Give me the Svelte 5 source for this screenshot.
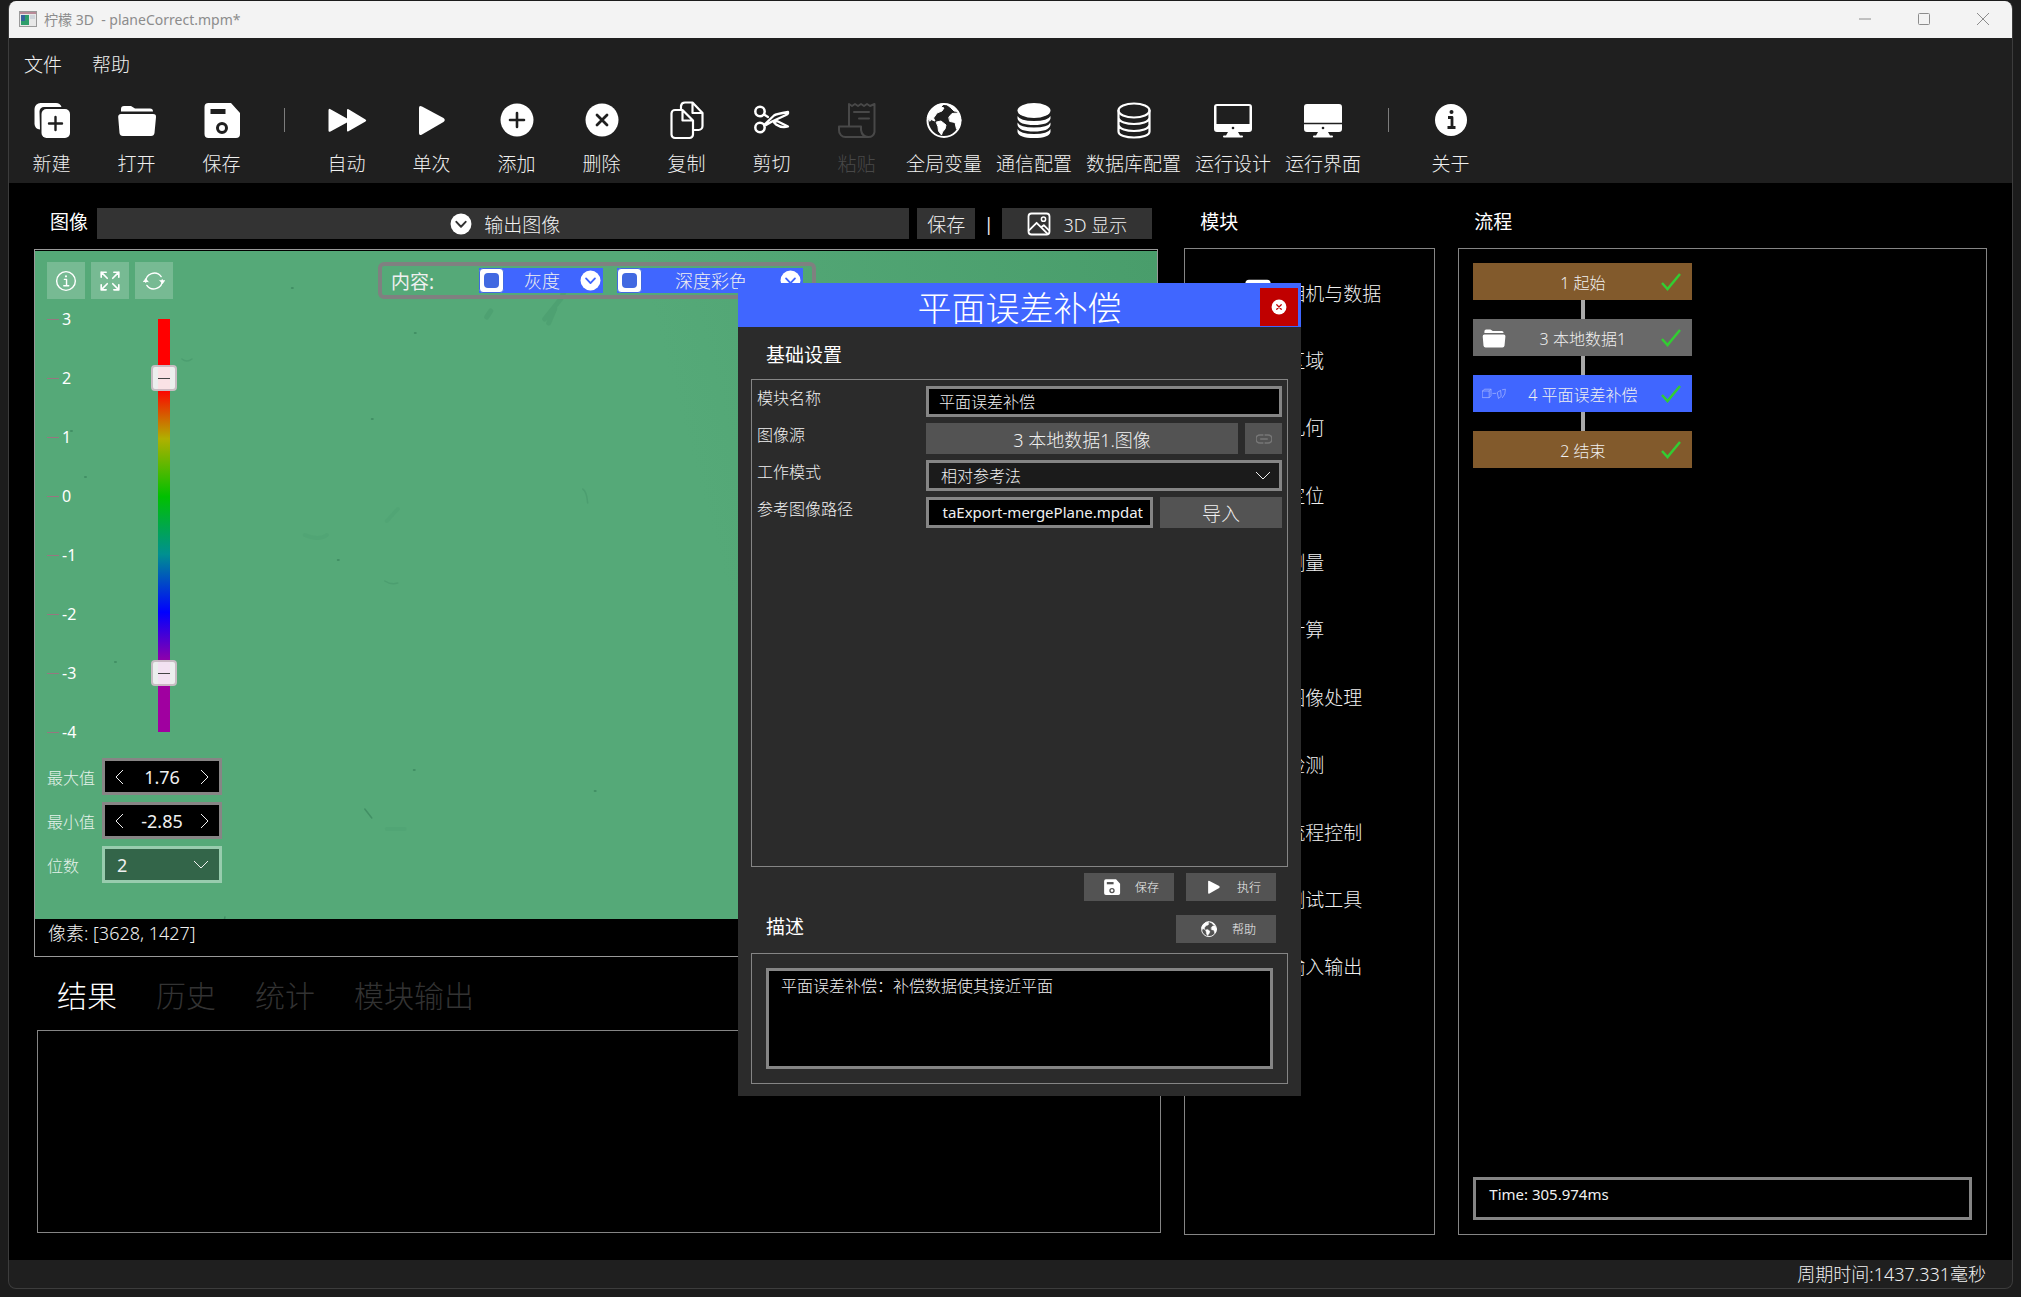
<script lang="ts">
  interface Tool {
    icon: string;
    label: string;
    disabled?: boolean;
  }

  const toolGroups: Tool[][] = [
    [
      { icon: "new", label: "新建" },
      { icon: "folder", label: "打开" },
      { icon: "save", label: "保存" },
    ],
    [
      { icon: "auto", label: "自动" },
      { icon: "play", label: "单次" },
      { icon: "add", label: "添加" },
      { icon: "remove", label: "删除" },
      { icon: "copy", label: "复制" },
      { icon: "cut", label: "剪切" },
      { icon: "paste", label: "粘贴", disabled: true },
      { icon: "globe", label: "全局变量" },
      { icon: "dbFilled", label: "通信配置" },
      { icon: "db", label: "数据库配置" },
      { icon: "screen", label: "运行设计" },
      { icon: "screenFilled", label: "运行界面" },
    ],
    [{ icon: "info", label: "关于" }],
  ];

  const modules = ["相机与数据", "区域", "几何", "定位", "测量", "计算", "图像处理", "检测", "流程控制", "测试工具", "输入输出"];

  const flow = [
    { label: "1 起始", kind: "terminal", icon: "" },
    { label: "3 本地数据1", kind: "data", icon: "folder" },
    { label: "4 平面误差补偿", kind: "active", icon: "plane" },
    { label: "2 结束", kind: "terminal", icon: "" },
  ];

  const ticks = [3, 2, 1, 0, -1, -2, -3, -4];
  const tabs = ["结果", "历史", "统计", "模块输出"];

  let activeTab = $state("结果");
  let upper = $state(2);
  let lower = $state(-3);
  let maxValue = $state("1.76");
  let minValue = $state("-2.85");
  let moduleName = $state("平面误差补偿");
  let description = $state("平面误差补偿：补偿数据使其接近平面");
  let dialogOpen = $state(true);

  function step(value: string, delta: number) {
    return (parseFloat(value) + delta).toFixed(2);
  }
</script>

{#snippet icon(name: string)}
  <svg class="icon" viewBox="0 0 40 40" fill="none" stroke-linecap="round" stroke-linejoin="round" aria-hidden="true">
    {#if name === "new"}
      <path d="M8 29.5 A6 6 0 0 1 2.5 24 V9 A6 6 0 0 1 8.5 3 H24 A6 6 0 0 1 29.5 7 H12 A4.500 4.500 0 0 0 7.500 11.500 Z" fill="currentColor" />
      <rect x="9.500" y="9" width="28.500" height="29" rx="5" fill="currentColor" />
      <path d="M23.500 17 V30 M17 23.500 H30" stroke="var(--cut)" stroke-width="2.400" />
    {:else if name === "folder"}
      <path d="M4 11.500 V9 A3 3 0 0 1 7 6 H14 L18 8.500 H33 A3 3 0 0 1 36 11.500 Z" fill="currentColor" />
      <path d="M4 14 H36 A3 3 0 0 1 39 17.300 L37.500 33 A3.500 3.500 0 0 1 34 36 H6 A3.500 3.500 0 0 1 2.500 33 L1.200 17.300 A3 3 0 0 1 4 14 Z" fill="currentColor" />
    {:else if name === "save"}
      <path d="M6.500 3 H29 L38 13 V34 A4 4 0 0 1 34 38 H6.500 A4 4 0 0 1 2.500 34 V7 A4 4 0 0 1 6.500 3 Z" fill="currentColor" />
      <path d="M8.500 9 H23.500 V14 H8.500 Z" fill="var(--cut)" />
      <circle cx="20" cy="28" r="4.500" stroke="var(--cut)" stroke-width="3" />
    {:else if name === "auto"}
      <path d="M1.500 10.500 Q1.500 8 3.500 9.200 L20 18.500 V10.500 Q20 8.500 21.500 9.200 L38.500 19.500 Q40 20.500 38.500 21.500 L21.500 31.200 Q20 32 20 30.500 V22.500 L3.500 31.500 Q1.500 32.500 1.500 30.500 Z" fill="currentColor" />
    {:else if name === "play"}
      <path d="M7 8 Q7 5 10 6.500 L31.500 18 Q34 20 31.500 22 L10 34.500 Q7 36 7 33 Z" fill="currentColor" />
    {:else if name === "add"}
      <circle cx="20" cy="20" r="16.500" fill="currentColor" />
      <path d="M20 13 V27 M13 20 H27" stroke="var(--cut)" stroke-width="2.600" />
    {:else if name === "remove"}
      <circle cx="20" cy="20" r="16.500" fill="currentColor" />
      <path d="M15 15 L25 25 M25 15 L15 25" stroke="var(--cut)" stroke-width="2.800" />
    {:else if name === "copy"}
      <g stroke="currentColor" stroke-width="2.200">
        <path d="M14 9 V6 A4 4 0 0 1 18 2.500 H25.500 L35.500 13 V26 A4 4 0 0 1 31.500 30 H27 M25.500 2.500 V13 H35.500" />
        <path d="M8 10 H15.500 L26 20.500 V34.500 A3.500 3.500 0 0 1 22.500 38 H8 A3.500 3.500 0 0 1 4.500 34.500 V13.500 A3.500 3.500 0 0 1 8 10 Z M15.500 10 V20.500 H26" />
      </g>
    {:else if name === "cut"}
      <g stroke="currentColor">
        <circle cx="8" cy="11.500" r="4.700" stroke-width="2.500" />
        <circle cx="8" cy="27.500" r="4.700" stroke-width="2.500" />
        <path d="M12 14.500 L16 17 M12.500 24.500 L22 15.500 Q24 14 36 12 Q36.500 14 34 15 L20 21.500 L14 25 M22 22.500 L25 21 L36 26.500 Q30 28.500 24 24.500 Z" stroke-width="2.300" />
      </g>
    {:else if name === "paste"}
      <path d="M12 26 V4 L15 6 L18 4 L21 6 L24 4 L27 6 L30 4 L33 6 L37.500 4 V32 A6 6 0 0 1 31.500 37 H9 A6.500 6.500 0 0 1 2 30 V26.500 H24 V30 Q25 37 31.500 37 M17 12 H32 M22 18.500 H32" stroke="currentColor" stroke-width="2" />
    {:else if name === "globe"}
      <circle cx="20" cy="20.500" r="16.500" stroke="currentColor" stroke-width="2" />
      <path d="M3.500 17 Q6 8 14 5 L20 3.500 L17 7 L20 8 L18 11 L13 13 L11 16 L9.500 18 L11 21 L7 19.500 L6 21 Z M23 4.500 L30 6.500 L34 11.500 L30 11 L27 8 Z M12.500 22 L17 21 L22 25 L21 29 L18.500 32 L17.500 35 L14.500 31 L14 27 Z M25 17 L28 13.500 L34 13 L37 20 L35 28 L32.500 29 L31 22.500 L26 21.500 Z" fill="currentColor" stroke="currentColor" />
    {:else if name === "dbFilled"}
      <ellipse cx="20" cy="10.500" rx="16.500" ry="7.500" fill="currentColor" />
      <g fill="currentColor">
        <path d="M3.500 16 Q6 21 20 21 Q34 21 36.500 16 V18.500 Q35 25 20 25 Q5 25 3.500 18.500 Z" />
        <path d="M3.500 22.500 Q6 27.500 20 27.500 Q34 27.500 36.500 22.500 V25 Q35 31.500 20 31.500 Q5 31.500 3.500 25 Z" />
        <path d="M3.500 29 Q6 34 20 34 Q34 34 36.500 29 V32 Q35 38 20 38 Q5 38 3.500 32 Z" />
      </g>
    {:else if name === "db"}
      <g stroke="currentColor" stroke-width="2.200">
        <ellipse cx="20" cy="10.500" rx="15.500" ry="7" />
        <path d="M4.500 10.500 V31.500 C4.500 39.500 35.500 39.500 35.500 31.500 V10.500 M4.500 18 C6 26 34 26 35.500 18 M4.500 25 C6 33 34 33 35.500 25" />
      </g>
    {:else if name === "screen"}
      <path d="M4 4 H36 A3 3 0 0 1 39 7 V29 A3 3 0 0 1 36 32 H25 L27 35.500 H29 A1 1 0 0 1 29 37.500 H11 A1 1 0 0 1 11 35.500 H13 L15 32 H4 A3 3 0 0 1 1 29 V7 A3 3 0 0 1 4 4 Z" fill="currentColor" />
      <path d="M3.500 6 H36.500 V24 H3.500 Z" fill="var(--cut)" />
      <circle cx="20" cy="28" r="1.300" fill="var(--cut)" />
    {:else if name === "screenFilled"}
      <path d="M4 4 H36 A3 3 0 0 1 39 7 V29 A3 3 0 0 1 36 32 H25 L27 35.500 H29 A1 1 0 0 1 29 37.500 H11 A1 1 0 0 1 11 35.500 H13 L15 32 H4 A3 3 0 0 1 1 29 V7 A3 3 0 0 1 4 4 Z" fill="currentColor" />
      <path d="M1 23.500 H39" stroke="var(--cut)" stroke-width="1.300" />
      <circle cx="20" cy="28" r="1.300" fill="var(--cut)" />
    {:else if name === "info"}
      <circle cx="20" cy="20" r="16" fill="currentColor" />
      <path d="M17 17.500 H21 V27 M16.500 27.500 H24.500" stroke="var(--cut)" stroke-width="2.800" stroke-linecap="butt" />
      <circle cx="20.500" cy="12" r="2" fill="var(--cut)" />
    {:else if name === "infoLine"}
      <circle cx="20" cy="20" r="17" stroke="currentColor" stroke-width="2.600" />
      <path d="M17 17 H21 V28 M16 28.500 H25" stroke="currentColor" stroke-width="2.600" />
      <circle cx="20" cy="11.500" r="2" fill="currentColor" />
    {:else if name === "expand"}
      <path d="M4 13 V4 H13 M4 4 L15 15 M27 4 H36 V13 M36 4 L25 15 M4 27 V36 H13 M4 36 L15 25 M27 36 H36 V27 M36 36 L25 25" stroke="currentColor" stroke-width="3" />
    {:else if name === "refresh"}
      <path d="M5 22 A15.500 15.500 0 0 1 33 12 M35 18 A15.500 15.500 0 0 1 7 28" stroke="currentColor" stroke-width="2.600" />
      <path d="M0 22 L5 15.500 L10 22 M30 18.500 L35.500 25 L40 18.500" fill="currentColor" stroke="currentColor" />
    {:else if name === "drop"}
      <circle cx="20" cy="20" r="19" fill="currentColor" />
      <path d="M11.500 16 L20 25 L28.500 16" stroke="var(--cut)" stroke-width="3.500" />
    {:else if name === "picture"}
      <rect x="2.500" y="2.500" width="35" height="35" rx="5" stroke="currentColor" stroke-width="3" />
      <path d="M3 31 L16 18 L34 36 M24 25 L28 22 L37 31" stroke="currentColor" stroke-width="3" />
      <circle cx="27.500" cy="12" r="3.500" stroke="currentColor" stroke-width="2.500" />
    {:else if name === "link"}
      <path d="M17 10 H10 A10 10 0 0 0 10 30 H17 M23 10 H30 A10 10 0 0 1 30 30 H23 M12 20 H28" stroke="currentColor" stroke-width="4" />
    {:else if name === "plane"}
      <path d="M1 15 H12 V26 H1 Z M1 15 L4 12 H15 V23 L12 26 M12 15 L15 12 M18 19 H23 M26 17 L31 14 L32 24 L28 27 Z M34 13 L39 12 L38 20 L34 26" stroke="currentColor" stroke-width="1.200" />
    {:else if name === "camera"}
      <path d="M2 6 A5 5 0 0 1 7 1 H33 A5 5 0 0 1 38 6 V34 A5 5 0 0 1 33 39 H7 A5 5 0 0 1 2 34 Z" fill="currentColor" />
      <circle cx="20" cy="21" r="9" stroke="var(--cut)" stroke-width="3" />
    {/if}
  </svg>
{/snippet}

{#snippet chevron(points: string)}
  <svg class="chevron" viewBox="0 0 16 16" fill="none" stroke="currentColor" aria-hidden="true">
    <polyline {points} />
  </svg>
{/snippet}

<div class="window">
  <header class="titlebar">
    <svg class="app-icon" viewBox="0 0 18 16" aria-hidden="true">
      <rect x="0.500" y="0.500" width="17" height="15" fill="#e8e8e8" stroke="#9a9a9a" />
      <rect x="1" y="1" width="16" height="2" fill="#b98a98" />
      <rect x="2" y="4" width="8" height="10" fill="#2e9e6b" />
      <rect x="2" y="4" width="4" height="6" fill="#35659c" />
      <rect x="11" y="4" width="5" height="4" fill="#cfd4da" />
    </svg>
    <span class="app-title">柠檬 3D&nbsp; - planeCorrect.mpm*</span>
    <div class="window-buttons">
      <button type="button" aria-label="最小化">
        <svg viewBox="0 0 12 12"><path d="M0 6 H12" /></svg>
      </button>
      <button type="button" aria-label="最大化">
        <svg viewBox="0 0 12 12"><rect x="0.500" y="0.500" width="11" height="11" rx="1" /></svg>
      </button>
      <button type="button" aria-label="关闭">
        <svg viewBox="0 0 12 12"><path d="M0 0 L12 12 M12 0 L0 12" /></svg>
      </button>
    </div>
  </header>

  <nav class="menu">
    <button type="button">文件</button>
    <button type="button">帮助</button>
  </nav>

  <div class="toolbar">
    {#each toolGroups as group, i}
      {#if i > 0}<span class="tool-sep"></span>{/if}
      {#each group as tool}
        <button type="button" class="tool" disabled={tool.disabled}>
          {@render icon(tool.icon)}
          <span>{tool.label}</span>
        </button>
      {/each}
    {/each}
  </div>

  <main>
    <section class="left">
      <div class="image-head">
        <h2>图像</h2>
        <button type="button" class="bar-button output">{@render icon("drop")}输出图像</button>
        <button type="button" class="bar-button save">保存</button>
        <span class="pipe">|</span>
        <button type="button" class="bar-button show3d">{@render icon("picture")}3D 显示</button>
      </div>

      <div class="image-panel">
        <div class="canvas">
          <svg class="marks" viewBox="0 0 1123 668" preserveAspectRatio="none" fill="none" stroke="#3d8a60" stroke-linecap="round" aria-hidden="true">
            <path d="M510 68 L526 48 M514 72 L520 58 M452 66 L456 60 M528 44 L534 30" stroke-width="5" opacity="0.250" />
            <path d="M330 558 L337 567 M188 677 L190 666" stroke-width="1.500" opacity="0.800" />
            <path d="M147 108 Q152 112 157 108 M548 238 Q552 240 553 252 M350 330 Q356 334 363 332" stroke-width="1.500" opacity="0.350" />
            <path d="M380 82 h1 M36 180 h1 M50 226 h1 M80 411 h1 M303 309 h1 M257 37 h1 M337 168 h1 M379 519 h1 M560 540 h1" stroke-width="2" opacity="0.800" />
            <path d="M352 270 L363 258 M270 284 Q284 290 292 284 M352 578 H370" stroke-width="4" opacity="0.120" />
          </svg>

          <div class="canvas-top">
            <button type="button" class="glass" aria-label="信息">{@render icon("infoLine")}</button>
            <button type="button" class="glass" aria-label="全屏">{@render icon("expand")}</button>
            <button type="button" class="glass" aria-label="刷新">{@render icon("refresh")}</button>
            <div class="content-box">
              <span class="content-label">内容:</span>
              <div class="layer gray">
                <input type="checkbox" aria-label="灰度" checked />
                <button type="button"><span>灰度</span>{@render icon("drop")}</button>
              </div>
              <div class="layer depth">
                <input type="checkbox" aria-label="深度彩色" checked />
                <button type="button"><span>深度彩色</span>{@render icon("drop")}</button>
              </div>
            </div>
          </div>

          <div class="scale">
            <ul class="ticks">
              {#each ticks as tick}
                <li>{tick}</li>
              {/each}
            </ul>
            <div class="ramp">
              <input type="range" min="-4" max="3" step="0.01" aria-label="上限" bind:value={upper} />
              <input type="range" min="-4" max="3" step="0.01" aria-label="下限" bind:value={lower} />
            </div>
          </div>

          <div class="range-form">
            <label for="max-value">最大值</label>
            <div class="spin">
              <button type="button" aria-label="减小最大值" onclick={() => (maxValue = step(maxValue, -0.01))}>{@render chevron("12,1 5,8 12,15")}</button>
              <input id="max-value" type="text" bind:value={maxValue} />
              <button type="button" aria-label="增大最大值" onclick={() => (maxValue = step(maxValue, 0.01))}>{@render chevron("4,1 11,8 4,15")}</button>
            </div>
            <label for="min-value">最小值</label>
            <div class="spin">
              <button type="button" aria-label="减小最小值" onclick={() => (minValue = step(minValue, -0.01))}>{@render chevron("12,1 5,8 12,15")}</button>
              <input id="min-value" type="text" bind:value={minValue} />
              <button type="button" aria-label="增大最小值" onclick={() => (minValue = step(minValue, 0.01))}>{@render chevron("4,1 11,8 4,15")}</button>
            </div>
            <label for="digits">位数</label>
            <div class="select digits">
              <select id="digits"><option>2</option></select>
              {@render chevron("1,4 8,11 15,4")}
            </div>
          </div>
        </div>
        <p class="pixel">像素: [3628, 1427]</p>
      </div>

      <div class="tabs" role="tablist">
        {#each tabs as tab}
          <button type="button" role="tab" aria-selected={activeTab === tab} class:active={activeTab === tab} onclick={() => (activeTab = tab)}>{tab}</button>
        {/each}
      </div>
      <div class="results"></div>
    </section>

    <section class="column">
      <h2>模块</h2>
      <ul class="modules">
        {#each modules as name, i}
          <li>
            <span class="module-icon">{#if i === 0}{@render icon("camera")}{/if}</span>
            {name}
          </li>
        {/each}
      </ul>
    </section>

    <section class="column">
      <h2>流程</h2>
      <div class="flow">
        <ol>
          {#each flow as node}
            <li class="node {node.kind}">
              <span class="node-icon">{#if node.icon}{@render icon(node.icon)}{/if}</span>
              <span class="node-label">{node.label}</span>
              <svg class="check" viewBox="0 0 20 18" fill="none" stroke="#32cd32" stroke-width="2.500" aria-hidden="true">
                <path d="M1 10 L6.500 16 L19 1" />
              </svg>
            </li>
          {/each}
        </ol>
        <textarea class="time" readonly aria-label="运行时间" value="Time: 305.974ms"></textarea>
      </div>
    </section>
  </main>

  <footer>周期时间:1437.331毫秒</footer>
</div>

{#if dialogOpen}
  <div class="dialog" role="dialog" aria-labelledby="dialog-title">
    <div class="dialog-bar">
      <h1 id="dialog-title">平面误差补偿</h1>
      <button type="button" class="close" aria-label="关闭" onclick={() => (dialogOpen = false)}>{@render icon("remove")}</button>
    </div>
    <div class="dialog-body">
      <h2>基础设置</h2>
      <div class="group settings">
        <label for="module-name">模块名称</label>
        <div class="field">
          <input id="module-name" type="text" bind:value={moduleName} />
        </div>
        <span class="field-label">图像源</span>
        <div class="field">
          <button type="button" class="wide">3 本地数据1.图像</button>
          <button type="button" class="link" aria-label="链接" disabled>{@render icon("link")}</button>
        </div>
        <label for="work-mode">工作模式</label>
        <div class="field">
          <div class="select mode">
            <select id="work-mode"><option>相对参考法</option></select>
            {@render chevron("1,4 8,11 15,4")}
          </div>
        </div>
        <label for="ref-path">参考图像路径</label>
        <div class="field">
          <input id="ref-path" class="path" type="text" value="taExport-mergePlane.mpdat" />
          <button type="button" class="import">导入</button>
        </div>
      </div>
      <div class="actions">
        <button type="button">{@render icon("save")}保存</button>
        <button type="button">{@render icon("play")}执行</button>
      </div>
      <div class="describe-head">
        <h2>描述</h2>
        <button type="button">{@render icon("globe")}帮助</button>
      </div>
      <div class="group describe">
        <textarea readonly aria-label="描述" bind:value={description}></textarea>
      </div>
    </div>
  </div>
{/if}

<style>
  :global(body) {
    margin: 0;
    background: #1c1c1c;
  }

  :global(#app) {
    position: relative;
    box-sizing: border-box;
    min-height: 100vh;
    padding: 1px 8px 8px;
    display: flex;
    font-family: "Noto Sans", "Noto Sans CJK SC", sans-serif;
    font-size: 16px;
    font-weight: 300;
    color: #f0f0f0;
  }

  *,
  *::before,
  *::after {
    box-sizing: border-box;
  }

  button,
  input,
  select,
  textarea {
    font: inherit;
    color: inherit;
    margin: 0;
    padding: 0;
    border: 0;
    border-radius: 0;
    background: none;
    outline: none;
  }

  h1,
  h2,
  p,
  ul,
  ol {
    margin: 0;
    padding: 0;
    list-style: none;
    font-weight: inherit;
  }

  h2 {
    font-size: 19px;
    line-height: 28px;
    font-weight: 400;
    color: #fff;
  }

  .window {
    --cut: #1f1f1f;
    flex: 1;
    min-width: 0;
    display: flex;
    flex-direction: column;
    border: 1px solid #3c3c3c;
    border-top: 0;
    border-radius: 8px;
    overflow: hidden;
    background: #1f1f1f;
  }

  .icon {
    display: block;
    flex: none;
    width: 40px;
    height: 40px;
  }

  .chevron {
    flex: none;
    width: 16px;
    height: 16px;
  }

  .titlebar {
    display: flex;
    align-items: center;
    height: 37px;
    padding: 0 0 2px 10px;
    background: #f3f3f3;
    color: #8c8c8c;
    font-weight: 400;
  }

  .app-icon {
    width: 18px;
    height: 16px;
  }

  .app-title {
    flex: 1;
    margin-left: 7px;
    font-size: 14px;
  }

  .window-buttons {
    display: flex;
  }

  .window-buttons button {
    width: 59px;
    height: 35px;
  }

  .window-buttons svg {
    width: 12px;
    height: 12px;
    fill: none;
    stroke: #8c8c8c;
  }

  .menu {
    display: flex;
    gap: 30px;
    padding: 13px 15px 0;
    height: 62px;
  }

  .menu button {
    height: 28px;
    font-size: 19px;
    line-height: 28px;
  }

  .toolbar {
    display: flex;
    height: 83px;
  }

  .tool {
    display: flex;
    flex-direction: column;
    align-items: center;
    gap: 10px;
    min-width: 85px;
    padding: 0 7px;
    font-size: 19px;
    line-height: 28px;
    white-space: nowrap;
  }

  .tool .icon {
    color: #fff;
  }

  .tool:disabled,
  .tool:disabled .icon {
    color: #484848;
  }

  .tool-sep {
    width: 1px;
    height: 24px;
    margin: 8px 19px 0 20px;
    background: #7c7c7c;
  }

  main {
    flex: 1;
    display: grid;
    grid-template-columns: minmax(0, 1128fr) 251px minmax(0, 529fr);
    gap: 23px;
    padding: 25px;
    background: #000;
  }

  .left {
    display: flex;
    flex-direction: column;
    padding-bottom: 2px;
  }

  .image-head {
    display: flex;
    align-items: center;
    padding: 0 9px 0 16px;
  }

  .image-head h2 {
    align-self: flex-start;
    width: 47px;
  }

  .bar-button {
    display: flex;
    align-items: center;
    justify-content: center;
    height: 31px;
    background: #333;
    font-size: 19px;
    --cut: #333;
  }

  .bar-button .icon {
    width: 22px;
    height: 22px;
    color: #fff;
  }

  .output {
    flex: 1;
    gap: 12px;
    padding-left: 4px;
    margin-right: 8px;
  }

  .save {
    width: 58px;
  }

  .pipe {
    width: 27px;
    text-align: center;
    font-size: 18px;
    font-weight: 400;
  }

  .show3d {
    width: 150px;
    gap: 12px;
    font-size: 18px;
  }

  .show3d .icon {
    width: 24px;
    height: 24px;
  }

  .image-panel {
    flex: 1;
    display: flex;
    flex-direction: column;
    margin: 10px 3px 0 0;
    padding-top: 1px;
    border: 1px solid #999;
  }

  .canvas {
    position: relative;
    flex: 1;
    padding: 11px 12px 30px;
    background: linear-gradient(75deg, #55a978 60%, #499d6b);
  }

  .marks {
    position: absolute;
    inset: 0;
    width: 100%;
    height: 100%;
  }

  .canvas-top {
    position: relative;
    display: flex;
    gap: 6px;
  }

  .glass {
    display: grid;
    place-items: center;
    width: 38px;
    height: 37px;
    background: rgba(255, 255, 255, 0.2);
    color: #fff;
  }

  .glass .icon {
    width: 22px;
    height: 22px;
  }

  .content-box {
    display: flex;
    align-items: center;
    width: 438px;
    height: 37px;
    margin-left: 199px;
    padding: 0 9px;
    border: 4px solid #808080;
    border-radius: 6px;
  }

  .content-label {
    flex: 1;
    font-size: 19px;
    font-weight: 400;
  }

  .layer {
    display: flex;
    height: 25px;
    background: #4066ff;
    --cut: #4066ff;
  }

  .gray {
    width: 124px;
    margin-right: 14px;
  }

  .depth {
    width: 186px;
  }

  .layer input {
    appearance: none;
    display: grid;
    place-items: center;
    width: 25px;
    height: 25px;
    border: 1px solid #4169e1;
    border-radius: 4px;
    background: #fff;
  }

  .layer input:checked::before {
    content: "";
    width: 15px;
    height: 15px;
    border-radius: 4px;
    background: #4169e1;
  }

  .layer button {
    flex: 1;
    display: flex;
    align-items: center;
    padding-right: 2px;
    font-size: 18px;
    line-height: 24px;
  }

  .layer button span {
    flex: 1;
    text-align: center;
  }

  .layer .icon {
    width: 21px;
    height: 21px;
    color: #fff;
  }

  .scale {
    position: relative;
    display: flex;
    height: 433px;
    margin-top: 10px;
  }

  .ticks {
    display: flex;
    flex-direction: column;
    justify-content: space-between;
    width: 111px;
    font-weight: 400;
    line-height: 20px;
  }

  .ticks li {
    display: flex;
    align-items: center;
    gap: 3px;
    color: #fff;
  }

  .ticks li::before {
    content: "";
    flex: none;
    width: 12px;
    height: 1px;
    background: #987680;
  }

  .ramp {
    position: relative;
    width: 12px;
    margin: 10px 0;
    background: linear-gradient(#f00 17%, #b0b000 29%, #00c000 43%, #009090 57%, #00f 71%, #a000a0 84%);
  }

  .ramp input {
    position: absolute;
    top: -13px;
    left: -7px;
    width: 26px;
    height: calc(100% + 26px);
    appearance: none;
    writing-mode: vertical-lr;
    direction: rtl;
    pointer-events: none;
  }

  .ramp input::-webkit-slider-thumb {
    appearance: none;
    width: 26px;
    height: 26px;
    border: 2px solid rgba(184, 168, 176, 0.7);
    border-radius: 4px;
    background: linear-gradient(#444, #444) center / 12px 1px no-repeat, rgba(250, 245, 248, 0.92);
    pointer-events: auto;
  }

  .range-form {
    position: relative;
    display: grid;
    grid-template-columns: 48px 120px;
    grid-auto-rows: 37px;
    gap: 7px;
    align-items: center;
    margin-top: 16px;
  }

  .range-form label {
    color: #e4f2ea;
    white-space: nowrap;
  }

  .spin {
    display: flex;
    height: 37px;
    padding: 0 4px;
    border: 3px solid #878585;
    background: #000;
    font-size: 18px;
    font-weight: 400;
  }

  .spin input {
    flex: 1;
    min-width: 0;
    text-align: center;
  }

  .spin button {
    display: grid;
    place-items: center;
    width: 20px;
  }

  .select {
    position: relative;
    display: flex;
    align-items: center;
  }

  .select select {
    flex: 1;
    align-self: stretch;
    appearance: none;
    padding: 0 12px;
  }

  .select .chevron {
    position: absolute;
    right: 10px;
    pointer-events: none;
  }

  .digits {
    height: 37px;
    border: 3px solid #98ccae;
    background: #336549;
    font-size: 18px;
    font-weight: 400;
  }

  .pixel {
    height: 37px;
    padding: 0 13px;
    font-size: 18px;
    line-height: 28px;
  }

  .tabs {
    display: flex;
    gap: 39px;
    padding: 17px 23px 0;
    height: 73px;
  }

  .tabs button {
    height: 44px;
    font-size: 30px;
    line-height: 44px;
    color: #333;
  }

  .tabs .active {
    color: #fff;
  }

  .results {
    min-height: 203px;
    margin-left: 3px;
    border: 1px solid #858585;
  }

  .column {
    display: flex;
    flex-direction: column;
  }

  .column h2 {
    padding: 0 16px;
    margin-bottom: 12px;
  }

  .modules {
    flex: 1;
    padding: 10px 0 0 59px;
    border: 1px solid #858585;
    font-size: 19px;
    display: grid;
    grid-template-rows: repeat(11, 1fr);
    padding-bottom: 234px;
  }

  .modules li {
    display: flex;
    align-items: center;
    white-space: nowrap;
  }

  .module-icon {
    width: 28px;
    margin-right: 14px;
  }

  .module-icon .icon {
    width: 28px;
    height: 28px;
    color: #fff;
  }

  .flow {
    flex: 1;
    display: flex;
    flex-direction: column;
    justify-content: space-between;
    padding: 14px;
    border: 1px solid #858585;
  }

  .flow ol {
    display: flex;
    flex-direction: column;
    gap: 19px;
    width: 219px;
    background: linear-gradient(#a9a9a9, #a9a9a9) center / 4px 100% no-repeat;
  }

  .node {
    display: grid;
    grid-template-columns: 24px 1fr 24px;
    align-items: center;
    height: 37px;
    padding: 0 9px;
  }

  .node.terminal {
    background: #825a2c;
  }

  .node.data {
    background: #696969;
    --cut: #696969;
  }

  .node.active {
    background: #4066ff;
  }

  .node .icon {
    width: 24px;
    height: 24px;
    color: #fff;
  }

  .node.active .icon {
    color: #a9b8ff;
  }

  .node-label {
    text-align: center;
    white-space: nowrap;
  }

  .check {
    width: 20px;
    height: 18px;
    margin-left: 2px;
  }

  .time {
    display: block;
    width: 100%;
    height: 43px;
    padding: 4px 13px;
    border: 3px solid #858585;
    background: #000;
    font-size: 15px;
    font-weight: 400;
    resize: none;
    overflow: hidden;
  }

  footer {
    height: 28px;
    padding-right: 26px;
    text-align: right;
    font-size: 18px;
    line-height: 28px;
  }

  .dialog {
    --cut: #535353;
    position: absolute;
    top: 283px;
    left: 738px;
    width: 563px;
    background: #2b2b2b;
  }

  .dialog-bar {
    display: grid;
    grid-template-columns: 1fr 38px;
    align-items: center;
    height: 44px;
    padding: 3px;
    background: #4066ff;
    --cut: #c00000;
  }

  h1 {
    padding: 3px 0 0 38px;
    text-align: center;
    font-size: 34px;
    line-height: 38px;
    color: #fff;
  }

  .close {
    display: grid;
    place-items: center;
    height: 38px;
    background: #c00000;
  }

  .close .icon {
    width: 18px;
    height: 18px;
    color: #fff;
  }

  .dialog-body {
    padding: 14px 13px 12px;
  }

  .dialog-body h2 {
    padding-left: 15px;
  }

  .dialog-body button {
    background: #535353;
  }

  .group {
    border: 1px solid #858585;
  }

  .settings {
    display: grid;
    grid-template-columns: 162px minmax(0, 1fr);
    grid-auto-rows: 31px;
    gap: 6px 7px;
    height: 488px;
    margin-top: 10px;
    padding: 6px 5px;
    align-content: start;
  }

  .settings label,
  .field-label {
    line-height: 24px;
  }

  .field {
    display: flex;
    gap: 7px;
  }

  .field input {
    flex: 1;
    min-width: 0;
    padding: 0 10px 2px;
    border: 3px solid #858585;
    background: #000;
  }

  .field .path {
    text-align: right;
    padding: 0 7px 2px;
    font-size: 15px;
    font-weight: 400;
  }

  .wide {
    flex: 1;
    font-size: 18px;
  }

  .link {
    display: grid;
    place-items: center;
    width: 37px;
    color: #777;
  }

  .link .icon {
    width: 16px;
    height: 16px;
  }

  .mode {
    flex: 1;
    border: 3px solid #858585;
    background: #1b1b1b;
  }

  .mode .chevron {
    right: 8px;
  }

  .import {
    width: 122px;
    font-size: 19px;
  }

  .actions {
    display: flex;
    justify-content: flex-end;
    gap: 12px;
    margin: 6px 12px 0 0;
  }

  .actions button,
  .describe-head button {
    display: flex;
    align-items: center;
    justify-content: flex-end;
    gap: 14px;
    width: 90px;
    height: 28px;
    padding-right: 15px;
    font-size: 12px;
  }

  .actions .icon,
  .describe-head .icon {
    width: 18px;
    height: 18px;
    color: #fff;
  }

  .describe-head {
    display: flex;
    align-items: flex-start;
    justify-content: space-between;
    margin: 14px 12px 10px 0;
  }

  .describe-head h2 {
    line-height: 24px;
  }

  .describe-head button {
    width: 100px;
    padding-right: 20px;
  }

  .describe {
    padding: 14px;
  }

  .describe textarea {
    display: block;
    width: 100%;
    height: 101px;
    padding: 2px 12px;
    border: 3px solid #858585;
    background: #000;
    resize: none;
  }
</style>
